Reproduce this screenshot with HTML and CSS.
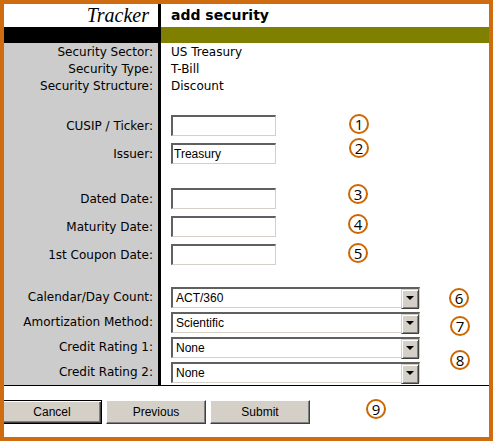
FILE: index.html
```
<!DOCTYPE html>
<html lang="en">
<head>
    <meta charset="UTF-8">
    <meta name="viewport" content="width=device-width, initial-scale=1.0">
    <title>Tracker - add security</title>
    <link rel="stylesheet" href="styles.css">
</head>
<body>
    <form class="frame">
        <div class="row header">
            <div class="brand">Tracker</div>
            <h1>add security</h1>
        </div>
        <div class="row bar">
            <div class="bar-left"></div>
            <div class="bar-right"></div>
        </div>

        <!-- Security summary -->
        <div class="row first">
            <div class="name">Security Sector:</div>
            <div class="value">US Treasury</div>
        </div>
        <div class="row">
            <div class="name">Security Type:</div>
            <div class="value">T-Bill</div>
        </div>
        <div class="row">
            <div class="name">Security Structure:</div>
            <div class="value">Discount</div>
        </div>
        <div class="row spacer"><div class="name"></div></div>

        <div class="row field">
            <label class="name" for="cusip">CUSIP / Ticker:</label>
            <div class="value"><input type="text" id="cusip"></div>
        </div>
        <div class="row field">
            <label class="name" for="issuer">Issuer:</label>
            <div class="value"><input type="text" id="issuer" value="Treasury"></div>
        </div>
        <div class="row spacer"><div class="name"></div></div>

        <!-- Dates -->
        <div class="row field">
            <label class="name" for="dated">Dated Date:</label>
            <div class="value"><input type="text" id="dated"></div>
        </div>
        <div class="row field">
            <label class="name" for="maturity">Maturity Date:</label>
            <div class="value"><input type="text" id="maturity"></div>
        </div>
        <div class="row field">
            <label class="name" for="coupon">1st Coupon Date:</label>
            <div class="value"><input type="text" id="coupon"></div>
        </div>
        <div class="row spacer-small"><div class="name"></div></div>

        <!-- Drop-downs -->
        <div class="row choice">
            <label class="name" for="daycount">Calendar/Day Count:</label>
            <div class="value"><div class="select"><select id="daycount"><option>ACT/360</option></select></div></div>
        </div>
        <div class="row choice">
            <label class="name" for="amortization">Amortization Method:</label>
            <div class="value"><div class="select"><select id="amortization"><option>Scientific</option></select></div></div>
        </div>
        <div class="row choice">
            <label class="name" for="rating1">Credit Rating 1:</label>
            <div class="value"><div class="select"><select id="rating1"><option>None</option></select></div></div>
        </div>
        <div class="row choice">
            <label class="name" for="rating2">Credit Rating 2:</label>
            <div class="value"><div class="select"><select id="rating2"><option>None</option></select></div></div>
        </div>

        <div class="buttons">
            <button type="button" class="default">Cancel</button>
            <button type="button">Previous</button>
            <button type="submit">Submit</button>
        </div>

        <!-- Numbered callouts -->
        <span class="callout c1">1</span>
        <span class="callout c2">2</span>
        <span class="callout c3">3</span>
        <span class="callout c4">4</span>
        <span class="callout c5">5</span>
        <span class="callout c6">6</span>
        <span class="callout c7">7</span>
        <span class="callout c8">8</span>
        <span class="callout c9">9</span>
    </form>
</body>
</html>
```
FILE: styles.css
```
* {
    box-sizing: border-box;
}

body {
    margin: 0;
    background: #fff;
    color: #000;
    font-family: Verdana, "DejaVu Sans", sans-serif;
    font-size: 12px;
    line-height: 17px;
}

.frame {
    position: relative;
    min-height: 100vh;
    border: 4px solid #d06c10;
    overflow: hidden;
}

.row {
    display: grid;
    grid-template-columns: 157px 1fr;
}

.brand {
    border-right: 3px solid #000;
    padding-right: 9px;
    text-align: right;
    font-family: "Liberation Serif", serif;
    font-style: italic;
    font-size: 20px;
    line-height: 23px;
}

h1 {
    margin: 0;
    padding-left: 10px;
    font-size: 14px;
    line-height: 23px;
}

.bar {
    height: 16px;
}

.bar-left {
    background: #000;
}

.bar-right {
    background: #808000;
}

.name {
    background: #ccc;
    border-right: 3px solid #000;
    padding-right: 5px;
    text-align: right;
}

.value {
    padding-left: 10px;
}

.first .name,
.first .value {
    padding-top: 1px;
}

.spacer {
    height: 17px;
}

.spacer-small {
    height: 16px;
}

.field .name {
    padding-top: 6px;
}

.field .value {
    padding-top: 3px;
    padding-bottom: 4px;
}

.choice .name {
    padding-top: 4px;
}

.choice .value {
    padding-top: 2px;
    padding-bottom: 2px;
}

input,
select {
    display: block;
    height: 21px;
    margin: 0;
    border: 2px solid;
    border-color: #606060 #d4d0c8 #d4d0c8 #606060;
    border-radius: 0;
    background: #fff;
    color: #000;
    font-family: "Liberation Sans", Arial, sans-serif;
    font-size: 12px;
}

input,
select {
    border-right-width: 1px;
    border-bottom-width: 1px;
}

input {
    width: 105px;
    padding: 0 1px;
}

.select {
    position: relative;
    max-width: 249px;
}

select {
    width: 100%;
    padding: 0 18px 0 3px;
    appearance: none;
}

/* Raised drop-down button with its arrow */
.select::before {
    content: "";
    position: absolute;
    top: 2px;
    right: 1px;
    width: 16px;
    height: 18px;
    border: 1px solid;
    border-color: #d4d0c8 #404040 #404040 #d4d0c8;
    background: #d4d0c8;
    box-shadow: inset 1px 1px #fff, inset -1px -1px #808080;
    pointer-events: none;
}

.select::after {
    content: "";
    position: absolute;
    top: 9px;
    right: 6px;
    border: 4px solid transparent;
    border-top-color: #000;
    border-bottom: 0;
    pointer-events: none;
}

.buttons {
    display: flex;
    gap: 4px;
    border-top: 1px solid #000;
    padding: 14px 0 13px;
}

button {
    width: 100px;
    height: 24px;
    border: 1px solid;
    border-color: #fff #404040 #404040 #fff;
    background: #d4d0c8;
    box-shadow: inset -1px -1px #808080;
    color: #000;
    font-family: "Liberation Sans", Arial, sans-serif;
    font-size: 12px;
}

/* The default button runs under the frame edge */
.default {
    margin-left: -2px;
    border-color: #000;
    box-shadow: inset 1px 1px #fff, inset -1px -1px #404040, inset -2px -2px #808080;
}

.callout {
    position: absolute;
    width: 20px;
    height: 20px;
    border: 2px solid #cc6600;
    border-radius: 50%;
    font-family: "Open Sans", sans-serif;
    font-size: 15px;
    line-height: 16px;
    text-align: center;
}

.c1 { left: 345px; top: 110px; }
.c2 { left: 345px; top: 134px; }
.c3 { left: 344px; top: 180px; }
.c4 { left: 344px; top: 210px; }
.c5 { left: 344px; top: 239px; }
.c6 { left: 445px; top: 284px; }
.c7 { left: 446px; top: 312px; }
.c8 { left: 446px; top: 346px; }
.c9 { left: 362px; top: 395px; }
```
